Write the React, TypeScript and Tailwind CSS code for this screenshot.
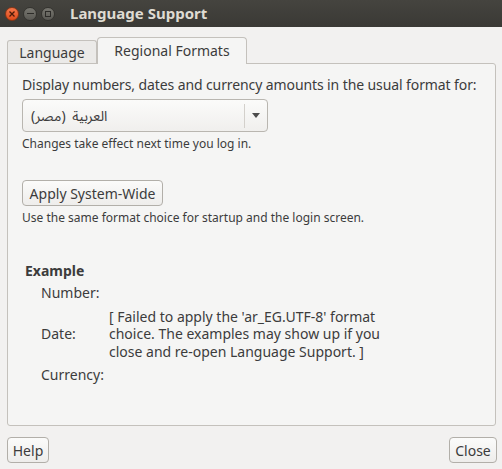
import React from "react";

const font = { fontFamily: '"Noto Sans", "Noto Sans Arabic", "DejaVu Sans", sans-serif' };

export default function App() {
  return (
    <div className="w-[502px] h-[469px] bg-[#f2f1f0] flex flex-col overflow-hidden text-[#3c3c3c]" style={font}>
      {/* title bar */}
      <div className="h-[27px] bg-gradient-to-b from-[#45443f] to-[#3a3935] flex items-center shrink-0">
        <div className="flex items-center gap-[4px] pl-[5px]">
          <div className="w-[14px] h-[14px] rounded-full bg-gradient-to-b from-[#f5774a] to-[#de4a17] border border-[#8a3616] flex items-center justify-center">
            <svg width="8" height="8" viewBox="0 0 8 8"><path d="M1.5 1.5 L6.5 6.5 M6.5 1.5 L1.5 6.5" stroke="#4a1a08" strokeWidth="1.3" /></svg>
          </div>
          <div className="w-[14px] h-[14px] rounded-full bg-gradient-to-b from-[#77766f] to-[#5a5954] border border-[#34332f] flex items-center justify-center">
            <div className="w-[7px] h-[1.5px] bg-[#2c2b28]" />
          </div>
          <div className="w-[14px] h-[14px] rounded-full bg-gradient-to-b from-[#77766f] to-[#5a5954] border border-[#34332f] flex items-center justify-center">
            <div className="w-[6px] h-[6px] border border-[#2c2b28]" />
          </div>
        </div>
        <div className="ml-[15px] text-[#dfdbd2] font-bold text-[15px] leading-none">Language Support</div>
      </div>

      {/* notebook */}
      <div className="flex flex-col px-[6px] pt-[9px] shrink-0">
        <div className="flex items-end h-[27px] relative z-10">
          <div className="w-[90px] h-[23px] ml-[1px] border border-b-0 border-[#c4c1bc] rounded-t-[3px] bg-[#ebeae8] flex items-center justify-center text-[14px]">
            Language
          </div>
          <div className="w-[150px] h-[27px] border border-b-0 border-[#c4c1bc] rounded-t-[4px] bg-[#f5f5f4] flex items-center justify-center text-[14px] -mb-px pb-[1px]">
            Regional Formats
          </div>
        </div>
        <div className="h-[363px] ml-[1px] border border-[#c4c1bc] rounded-b-[3px] rounded-tr-[3px] bg-[#f5f5f4] flex flex-col px-[14px] pt-[11px]">
          <div className="text-[14px] leading-[20px] whitespace-nowrap tracking-[-0.1px]">Display numbers, dates and currency amounts in the usual format for:</div>
          <div className="mt-[4px] w-[246px] h-[33px] border border-[#b9b6b0] rounded-[4px] bg-gradient-to-b from-[#fbfbfa] to-[#f0efed] flex items-center">
            <div className="flex-1 pl-[8px] text-[14px]" style={{ textAlign: "left" }}>
              <span dir="rtl" style={{ wordSpacing: "3px" }}>العربية (مصر)</span>
            </div>
            <div className="w-px h-[24px] bg-[#d3d0cb]" />
            <div className="w-[22px] flex items-center justify-center">
              <svg width="8" height="5" viewBox="0 0 8 5"><path d="M0 0 L8 0 L4 5 Z" fill="#4c4c4c" /></svg>
            </div>
          </div>
          <div className="mt-[3px] text-[12px] leading-[18px]">Changes take effect next time you log in.</div>
          <div className="mt-[27px] w-[141px] h-[26px] border border-[#b2afa9] rounded-[4px] bg-gradient-to-b from-[#fbfbfa] to-[#eeedeb] flex items-center justify-center text-[14px]">
            Apply System-Wide
          </div>
          <div className="mt-[3px] text-[12px] leading-[18px]">Use the same format choice for startup and the login screen.</div>
          <div className="mt-[35px] ml-[3px] font-bold text-[14px] leading-[18px]">Example</div>
          <div className="ml-[19px] mt-[4px] grid grid-cols-[68px_1fr] gap-y-[6px] text-[14px] leading-[17.5px] items-center">
            <div>Number:</div>
            <div />
            <div>Date:</div>
            <div className="w-[290px]">[ Failed to apply the 'ar_EG.UTF-8' format choice. The examples may show up if you close and re-open Language Support. ]</div>
            <div>Currency:</div>
            <div />
          </div>
        </div>
      </div>

      {/* bottom buttons */}
      <div className="flex justify-between pl-[7px] pt-[11px] pr-[5px]">
        <div className="w-[42px] h-[26px] border border-[#b2afa9] rounded-[4px] bg-gradient-to-b from-[#fbfbfa] to-[#eeedeb] flex items-center justify-center text-[14px]">Help</div>
        <div className="w-[48px] h-[26px] border border-[#b2afa9] rounded-[4px] bg-gradient-to-b from-[#fbfbfa] to-[#eeedeb] flex items-center justify-center text-[14px]">Close</div>
      </div>
    </div>
  );
}
